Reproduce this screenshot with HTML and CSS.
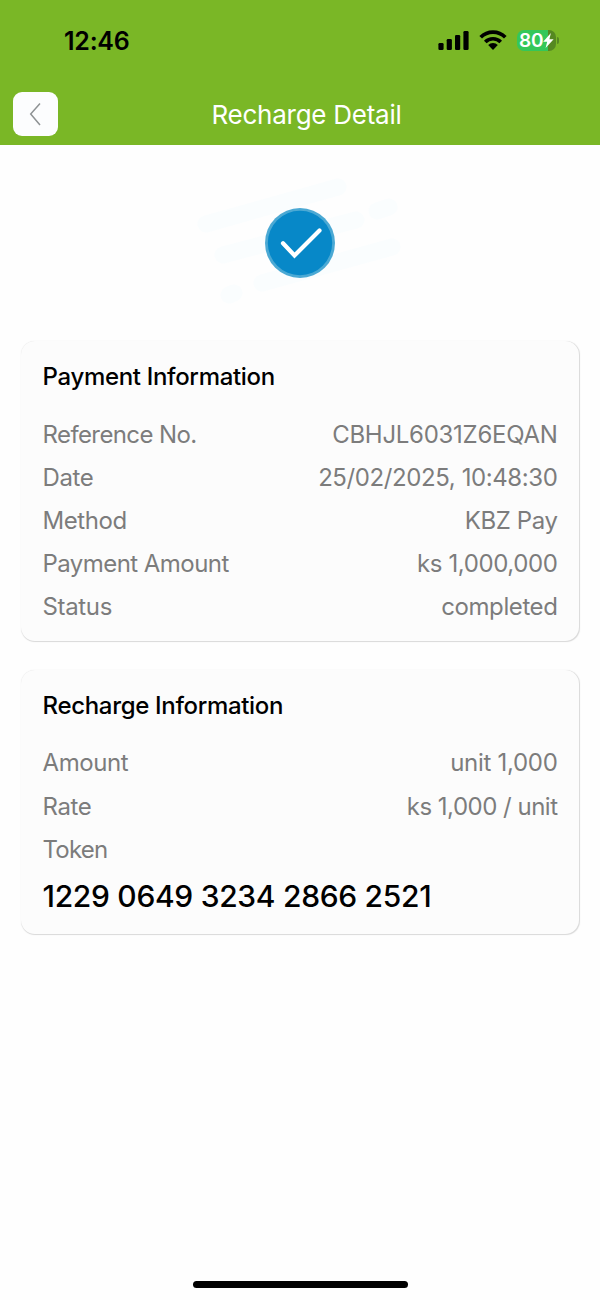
FILE: index.html
```html
<!DOCTYPE html>
<html lang="en">
<head>
<meta charset="utf-8">
<title>Recharge Detail</title>
<link rel="stylesheet" href="styles.css">
</head>
<body>
<header class="header">
  <div class="status-bar">
    <time class="clock">12:46</time>
    <div class="indicators">
      <svg class="signal" width="32" height="20" viewBox="0 0 32 20"><rect x="0.4" y="13" width="5.2" height="7" rx="1.3"/><rect x="8.7" y="9" width="5.2" height="11" rx="1.3"/><rect x="17" y="5" width="5.2" height="15" rx="1.3"/><rect x="25.4" y="1" width="5.2" height="19" rx="1.3"/></svg>
      <svg class="wifi" width="28" height="20" viewBox="0 0 28 20"><g fill="none" stroke="#000" stroke-width="3.7"><path d="M1.7 7.3a17.3 17.3 0 0 1 24.6 0"/><path d="M6.3 12a10.8 10.8 0 0 1 15.4 0"/></g><path d="M9.2 15.1a6.8 6.8 0 0 1 9.6 0L14 20z"/></svg>
      <div class="battery"><span class="level">80</span>
        <svg class="bolt" width="11" height="15" viewBox="0 0 12 15" preserveAspectRatio="none"><path d="M8.6 0L0.2 8.7h4.4L2.8 15 11.6 6.2H7z" fill="#fff"/></svg>
      </div>
    </div>
  </div>
  <nav class="nav">
    <button class="back" aria-label="Back"><svg width="44" height="44" viewBox="0 0 44 44"><path d="M27 11.5L17.7 22 27 33" fill="none" stroke="#8e9294" stroke-width="1.5"/></svg></button>
    <h1 class="title">Recharge Detail</h1>
  </nav>
</header>
<main class="content">
  <div class="success">
    <svg width="240" height="140" viewBox="0 0 240 140">
      <g stroke="#fafdfe" stroke-width="17" stroke-linecap="round" fill="none">
        <path d="M26 54L158 17"/><path d="M43 85L176 50"/><path d="M197 41L209 37"/><path d="M82 113L212 77"/><path d="M49 125L54 123"/>
      </g>
      <circle cx="120" cy="73" r="35" fill="#4ba9d4"/>
      <circle cx="120" cy="73" r="32.2" fill="#0788c8"/>
      <path d="M103 73.2L114.5 85.5L139.5 60.5" fill="none" stroke="#fff" stroke-width="4.2" stroke-linecap="round"/>
    </svg>
  </div>
  <section class="card">
    <h2 class="heading">Payment Information</h2>
    <dl class="rows">
      <div class="row"><dt class="reference">Reference No.</dt><dd class="code">CBHJL6031Z6EQAN</dd></div>
      <div class="row"><dt>Date</dt><dd>25/02/2025, 10:48:30</dd></div>
      <div class="row"><dt>Method</dt><dd>KBZ Pay</dd></div>
      <div class="row"><dt class="wide-label">Payment Amount</dt><dd>ks 1,000,000</dd></div>
      <div class="row"><dt class="status">Status</dt><dd>completed</dd></div>
    </dl>
  </section>
  <section class="card recharge">
    <h2 class="heading">Recharge Information</h2>
    <dl class="rows">
      <div class="row"><dt>Amount</dt><dd class="units">unit 1,000</dd></div>
      <div class="row"><dt>Rate</dt><dd class="rate">ks 1,000 / unit</dd></div>
      <div class="row"><dt class="token-label">Token</dt></div>
    </dl>
    <p class="token">1229 0649 3234 2866 2521</p>
  </section>
</main>
<footer class="footer"><div class="home-indicator"></div></footer>
</body>
</html>
```

FILE: styles.css
```css
* { box-sizing: border-box; }
body { margin: 0; height: 1300px; display: flex; flex-direction: column; background: #fefefe; color: #000; font-family: Inter, "Liberation Sans", sans-serif; white-space: nowrap; }
h1, h2, dl, dd, p { margin: 0; }
svg { display: block; }
.header { height: 145px; background: #7ab726; }
.status-bar { height: 92px; padding: 26px 41px 0 64px; display: flex; justify-content: space-between; align-items: flex-start; }
.clock { font-size: 25px; line-height: 30px; font-weight: 600; letter-spacing: -0.25px; }
.indicators { display: flex; align-items: flex-start; padding-top: 4px; }
.wifi { margin-left: 9px; }
.battery { position: relative; margin-left: 10px; width: 39px; height: 21px; margin-right: 3px; border-radius: 7px; background: linear-gradient(90deg, #34c759 0 31px, #558821 31px); display: flex; align-items: center; padding-left: 2px; }
.battery::after { content: ""; position: absolute; left: 40px; top: 7px; width: 2px; height: 7px; border-radius: 0 3px 3px 0; background: #558821; }
.level { color: #fff; font-size: 19px; line-height: 21px; font-weight: 600; letter-spacing: -0.2px; }
.nav { display: grid; grid-template-columns: 45px 1fr 32px; padding: 0 13px; align-items: start; }
.back { width: 45px; height: 44px; padding: 0; border: 0; border-radius: 9px; background: #fcfdfe; }
.title { text-align: center; color: #fff; font-size: 26px; line-height: 44px; padding-top: 1px; font-weight: 400; letter-spacing: -0.25px; }
.content { flex: 1; padding: 0 21px; }
.success { height: 196px; padding-top: 25px; display: flex; justify-content: center; }
.card { width: 558px; margin-bottom: 28.5px; padding: 15px 21.5px 13px 21.5px; background: #fcfcfc; border-radius: 14px; box-shadow: 0.8px 0.8px 1px rgba(0,0,0,.15); }
.heading { height: 56.5px; font-size: 24px; line-height: 42px; font-weight: 500; letter-spacing: -0.32px; }
.row { display: flex; justify-content: space-between; height: 43.2px; font-size: 24px; line-height: 43.2px; font-weight: 400; color: #7c7c7c; letter-spacing: -0.4px; }
.reference { letter-spacing: -0.6px; }
.code { letter-spacing: -0.28px; }
.wide-label { letter-spacing: -0.55px; }
.status { letter-spacing: -0.35px; }
.units { letter-spacing: -0.3px; }
.rate { letter-spacing: -0.5px; }
.token-label { letter-spacing: -0.8px; }
.token { font-size: 30px; line-height: 42px; font-weight: 500; padding: 3.5px 0 4px; letter-spacing: -0.3px; }
.footer { height: 22px; display: flex; justify-content: center; }
.home-indicator { width: 215px; height: 7px; margin-top: 3px; border-radius: 4px; background: #000; }
```
